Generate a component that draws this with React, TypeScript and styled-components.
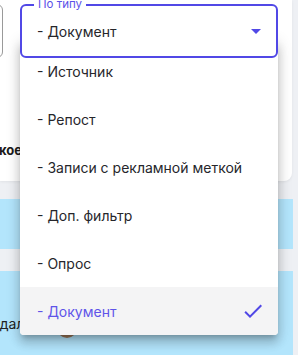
import styled, { createGlobalStyle } from 'styled-components'

const Global = createGlobalStyle`
  html, body { margin: 0; padding: 0; background: #eef0f4; }
  body { font-family: Inter, "Noto Sans", sans-serif; }
`

const Page = styled.div`
  position: relative;
  width: 298px;
  height: 355px;
  overflow: hidden;
  background: #eef0f4;
`

const Card = styled.div`
  width: 292px;
  height: 181px;
  background: #fff;
  border-bottom-right-radius: 8px;
  box-shadow: 0 1px 3px rgba(0, 0, 0, 0.06);
  display: flex;
  flex-direction: column;
`

const TopRow = styled.div`
  display: flex;
  gap: 17px;
  padding-top: 4px;
`

const GhostField = styled.div`
  flex: none;
  width: 200px;
  height: 54px;
  margin-left: -197px;
  border: 1px solid #9a9a9a;
  border-radius: 6px;
  box-sizing: border-box;
`

const SelectField = styled.div`
  position: relative;
  z-index: 3;
  flex: none;
  width: 258px;
  height: 54px;
  box-sizing: border-box;
  border: 2px solid #5148e6;
  border-radius: 6px;
  background: #fff;
  display: flex;
  align-items: center;
  padding: 0 8px 0 15px;
  font-size: 14px;
  color: #26262b;
`

const Legend = styled.span`
  position: absolute;
  top: -9px;
  left: 12px;
  padding: 0 4px;
  background: #fff;
  font-size: 11.5px;
  line-height: 14px;
  color: #5b50e8;
`

const Value = styled.span`
  flex: 1;
`

const SectionTitle = styled.div`
  margin-top: 84px;
  margin-left: -33px;
  font-size: 13px;
  font-weight: 700;
  color: #1a1a1a;
  white-space: nowrap;
`

const Band = styled.div<{ $h: number; $mt: number }>`
  width: 293px;
  height: ${p => p.$h}px;
  margin-top: ${p => p.$mt}px;
  background: #b3e5fc;
  display: flex;
  align-items: center;
`

const RowText = styled.span`
  flex: none;
  width: 66px;
  margin-left: -9px;
  margin-top: 20px;
  font-size: 14px;
  color: #222;
  white-space: nowrap;
`

const Avatar = styled.span`
  flex: none;
  width: 20px;
  height: 20px;
  margin-top: 30px;
  border-radius: 50%;
  background: #9c7758;
`

const Menu = styled.ul`
  position: absolute;
  z-index: 2;
  left: 20px;
  top: 39px;
  width: 258px;
  height: 296px;
  margin: 0;
  padding: 8px 0 0;
  box-sizing: border-box;
  list-style: none;
  background: #fff;
  border-radius: 4px;
  overflow: hidden;
  box-shadow: 0px 5px 5px -3px rgba(0, 0, 0, 0.2),
    0px 8px 10px 1px rgba(0, 0, 0, 0.14), 0px 3px 14px 2px rgba(0, 0, 0, 0.12);
`

const Item = styled.li<{ $selected?: boolean }>`
  height: 48px;
  display: flex;
  align-items: center;
  padding: 0 13px 0 17px;
  font-size: 14px;
  color: ${p => (p.$selected ? '#5f54e9' : '#26262b')};
  background: ${p => (p.$selected ? '#f4f4f5' : 'transparent')};
`

const ItemLabel = styled.span`
  flex: 1;
`

const items = ['Источник', 'Репост', 'Записи с рекламной меткой', 'Доп. фильтр', 'Опрос', 'Документ']

export default function App() {
  return (
    <Page>
      <Global />
      <Card>
        <TopRow>
          <GhostField />
          <SelectField>
            <Legend>По типу</Legend>
            <Value>- Документ</Value>
            <svg width="24" height="24" viewBox="0 0 24 24">
              <path d="M7 10l5 5 5-5z" fill="#5148e6" />
            </svg>
          </SelectField>
        </TopRow>
        <SectionTitle>Краткое описание</SectionTitle>
      </Card>
      <Band $h={50} $mt={18} />
      <Band $h={84} $mt={22}>
        <RowText>Удалить</RowText>
        <Avatar />
      </Band>
      <Menu>
        {items.map(t => (
          <Item key={t} $selected={t === 'Документ'}>
            <ItemLabel>- {t}</ItemLabel>
            {t === 'Документ' && (
              <svg width="24" height="24" viewBox="0 0 24 24">
                <path d="M9 16.17 4.83 12l-1.42 1.41L9 19 21 7l-1.41-1.41z" fill="#5148e6" />
              </svg>
            )}
          </Item>
        ))}
      </Menu>
    </Page>
  )
}
